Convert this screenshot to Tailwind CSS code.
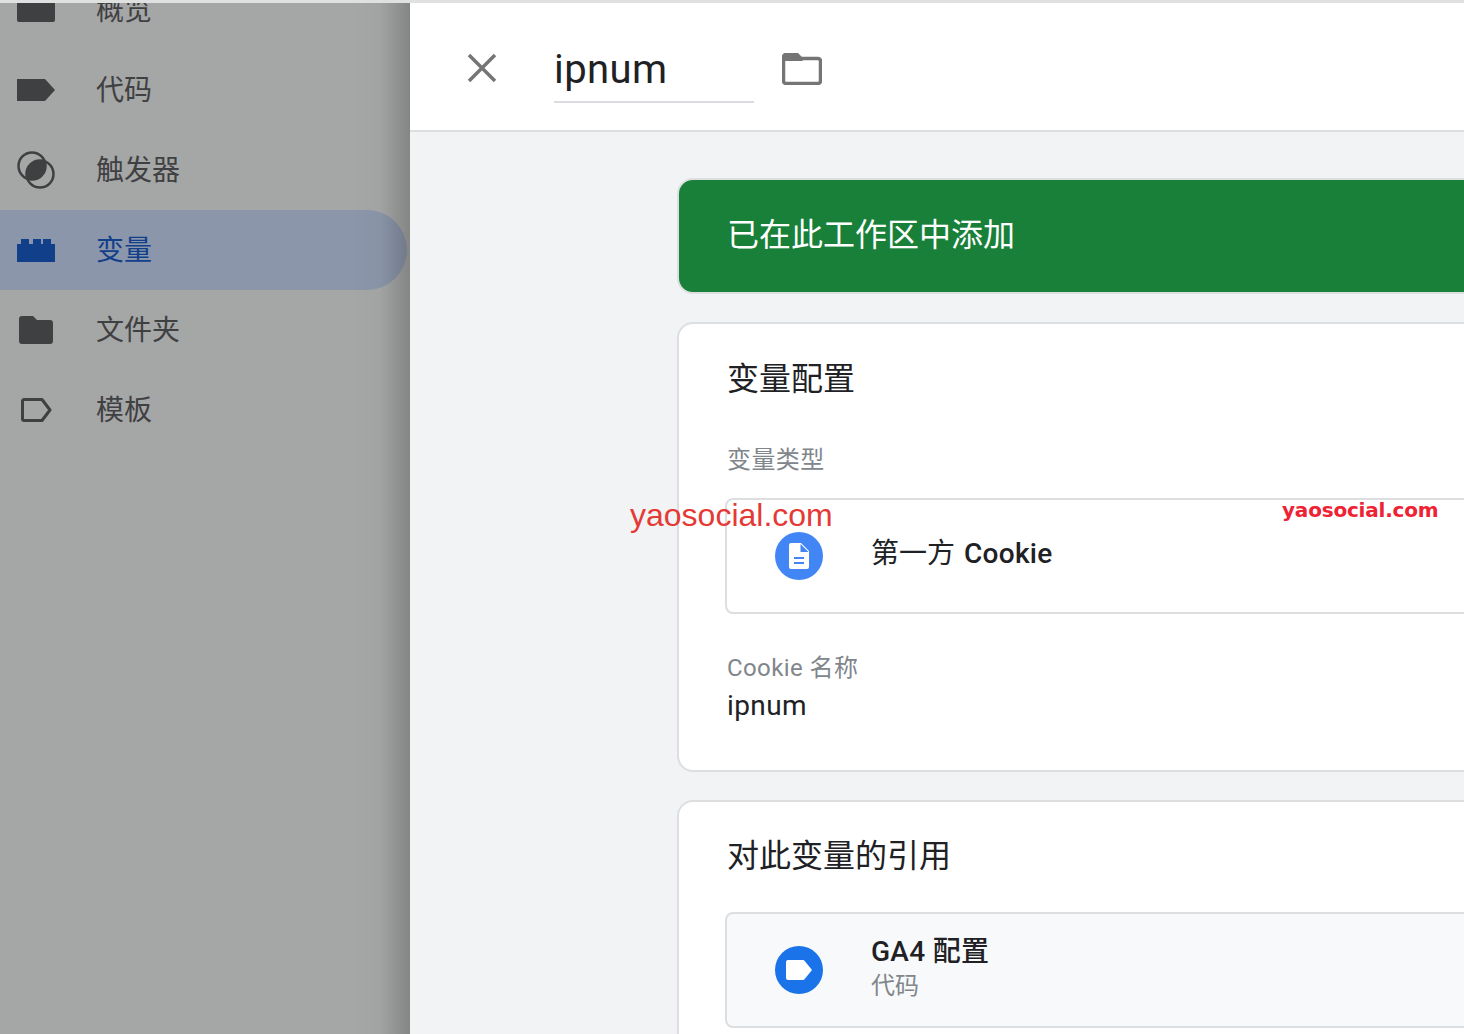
<!DOCTYPE html>
<html lang="zh-CN">
<head>
    <meta charset="UTF-8">
    <meta name="viewport" content="width=device-width, initial-scale=1.0">
    <title>ipnum</title>
    <script src="https://cdn.jsdelivr.net/npm/@tailwindcss/browser@4"></script>
</head>
<body class="bg-white">
    <div class="relative w-[1464px] h-[1034px] overflow-hidden font-['Roboto','Noto_Sans_CJK_SC',sans-serif]">
        <div class="h-[3px] bg-[#dfe0e0]"></div>
        <div class="flex h-[1031px]">
            <!-- dimmed sidebar -->
            <aside class="relative w-[410px] shrink-0 bg-[#a5a6a6] text-[#3f4042] text-[28px] overflow-hidden">
                <div class="-mt-[33px]">
                    <div class="flex items-center h-20 pl-[17px]">
                        <svg class="w-[38px] h-[24px] mr-[41px]" viewBox="0 0 38 24"><rect width="38" height="24" rx="2" fill="#3f4042"/></svg>
                        <span class="mt-[2px]">概览</span>
                    </div>
                    <div class="flex items-center h-20 pl-[17px]">
                        <svg class="w-[38px] h-[24px] mr-[41px]" viewBox="0 0 38 24"><path d="M0 1h28l10 11-10 11H0z" fill="#3f4042"/></svg>
                        <span class="mt-[2px]">代码</span>
                    </div>
                    <div class="flex items-center h-20 pl-[17px]">
                        <svg class="w-[38px] h-[38px] mr-[41px]" viewBox="0 0 38 38"><circle cx="15" cy="15" r="13.5" fill="none" stroke="#3f4042" stroke-width="2.5"/><circle cx="23" cy="23" r="13.5" fill="none" stroke="#3f4042" stroke-width="2.5"/><path d="M27.670 10.330A13.500 13.500 0 0 1 10.330 27.670 13.500 13.500 0 0 1 27.670 10.330z" fill="#3f4042"/></svg>
                        <span class="mt-[2px]">触发器</span>
                    </div>
                    <div class="flex items-center h-20 pl-[17px] mr-[3px] rounded-r-[40px] bg-[#8b96aa] text-[#123f8a]">
                        <svg class="w-[38px] h-[24px] mr-[41px]" viewBox="0 0 38 24"><path d="M0 24V6h4V1h8v5h4V1h8v5h2V1h8v5h4v18z" fill="#123f8a"/></svg>
                        <span class="mt-[2px]">变量</span>
                    </div>
                    <div class="flex items-center h-20 pl-[19px]">
                        <svg class="w-[34px] h-[28px] mr-[43px]" viewBox="0 0 34 28"><path d="M3 0h11l4 4h13a3 3 0 0 1 3 3v18a3 3 0 0 1-3 3H3a3 3 0 0 1-3-3V3a3 3 0 0 1 3-3z" fill="#3f4042"/></svg>
                        <span class="mt-[2px]">文件夹</span>
                    </div>
                    <div class="flex items-center h-20 pl-[21px]">
                        <svg class="w-[31px] h-[24px] mr-[44px]" viewBox="0 0 31 24"><path d="M3 1.500h18l8 10.500-8 10.500H3a1.500 1.500 0 0 1-1.500-1.500V3A1.500 1.500 0 0 1 3 1.500z" fill="none" stroke="#3f4042" stroke-width="3" stroke-linejoin="round"/></svg>
                        <span class="mt-[2px]">模板</span>
                    </div>
                </div>
                <div class="absolute inset-y-0 right-0 w-[60px] bg-gradient-to-r from-transparent via-black/2 to-black/20"></div>
            </aside>

            <main class="flex-1 min-w-0 bg-[#f1f3f4]">
                <header class="flex items-center h-[129px] bg-white border-b-2 border-[#dcdee0] pl-[56px]">
                    <svg class="w-[32px] h-[32px] mt-[2px] mr-[56px]" viewBox="0 0 32 32"><path d="M3 3l26 26M29 3L3 29" stroke="#757575" stroke-width="3.500" fill="none"/></svg>
                    <div class="w-[200px] h-[62px] mt-[10px] pt-[4px] border-b-2 border-[#dadce0] text-[40px] leading-[50px] tracking-[0.4px] text-[#202124]">ipnum</div>
                    <svg class="w-[40px] h-[32px] mt-[4px] ml-[28px]" viewBox="0 0 40 32"><path d="M4 1.500h11l4 4h17a2.500 2.500 0 0 1 2.500 2.500v20a2.500 2.500 0 0 1-2.500 2.500H4A2.500 2.500 0 0 1 1.500 28V4A2.500 2.500 0 0 1 4 1.500z" fill="none" stroke="#757575" stroke-width="3.500"/><path d="M2 3h15l4 5H2z" fill="#757575"/></svg>
                </header>

                <div class="pl-[268px] pt-[46px] w-[1100px]">
                    <div class="h-[116px] -ml-[1px] rounded-[16px] bg-[#188038] border-2 border-[#dcdee0] flex items-center pl-[48px] pb-[2px] text-[32px] text-white">已在此工作区中添加</div>

                    <section class="-ml-[1px] mt-[28px] h-[450px] rounded-[16px] bg-white border-2 border-[#dcdee0] pl-[48px] pt-[31px]">
                        <h2 class="text-[32px] leading-[48px] text-[#202124]">变量配置</h2>
                        <p class="mt-[41px] text-[24px] leading-[32px] tracking-[0.4px] text-[#80868b]">变量类型</p>
                        <div class="flex items-center -ml-[2px] mt-[22px] h-[116px] pl-[48px] rounded-l-[8px] border-2 border-[#dcdee0]">
                            <span class="flex items-center justify-center w-[48px] h-[48px] rounded-full bg-[#4285f4]">
                                <svg class="w-[24px] h-[28px]" viewBox="0 0 24 28"><path d="M4 1h10l8 8v16a2 2 0 0 1-2 2H4a2 2 0 0 1-2-2V3a2 2 0 0 1 2-2z" fill="#fff"/><path d="M13.500 2v8h8zM7 15h10v2H7zM7 20h10v2H7z" fill="#4285f4"/></svg>
                            </span>
                            <span class="ml-[48px] -mt-[4px] text-[28px] text-[#202124]">第一方 <span class="ml-[2px] font-medium tracking-[0.3px]">Cookie</span></span>
                        </div>
                        <p class="mt-[38px] text-[24px] leading-[32px] tracking-[0.4px] text-[#80868b]">Cookie 名称</p>
                        <p class="mt-[4px] text-[28px] leading-[36px] tracking-[0.4px] text-[#202124]">ipnum</p>
                    </section>

                    <section class="-ml-[1px] mt-[28px] h-[300px] rounded-[16px] bg-white border-2 border-[#dcdee0] pl-[48px] pt-[30px]">
                        <h2 class="text-[32px] leading-[48px] text-[#202124]">对此变量的引用</h2>
                        <div class="flex items-center -ml-[2px] mt-[32px] h-[116px] pl-[48px] rounded-l-[8px] bg-[#f8f9fa] border-2 border-[#dcdee0]">
                            <span class="flex items-center justify-center w-[48px] h-[48px] rounded-full bg-[#1a73e8]">
                                <svg class="w-[26px] h-[20px]" viewBox="0 0 26 20"><path d="M2 0h15a2 2 0 0 1 1.500.7L26 10l-7.500 9.300A2 2 0 0 1 17 20H2a2 2 0 0 1-2-2V2a2 2 0 0 1 2-2z" fill="#fff"/></svg>
                            </span>
                            <div class="ml-[48px] pb-[4px]">
                                <div class="text-[28px] leading-[36px] font-medium tracking-[0.3px] text-[#202124]">GA4 配置</div>
                                <div class="text-[24px] leading-[32px] text-[#80868b]">代码</div>
                            </div>
                        </div>
                    </section>
                </div>
            </main>
        </div>

        <!-- watermarks -->
        <span class="absolute left-[630px] top-[496px] text-[32px] leading-[38px] text-[#e53935] font-['Liberation_Sans',sans-serif]">yaosocial.com</span>
        <span class="absolute left-[1282px] top-[497px] text-[20px] leading-[26px] font-bold tracking-[-0.2px] text-[#ee2233] font-['DejaVu_Sans',sans-serif]">yaosocial.com</span>
    </div>
</body>
</html>
